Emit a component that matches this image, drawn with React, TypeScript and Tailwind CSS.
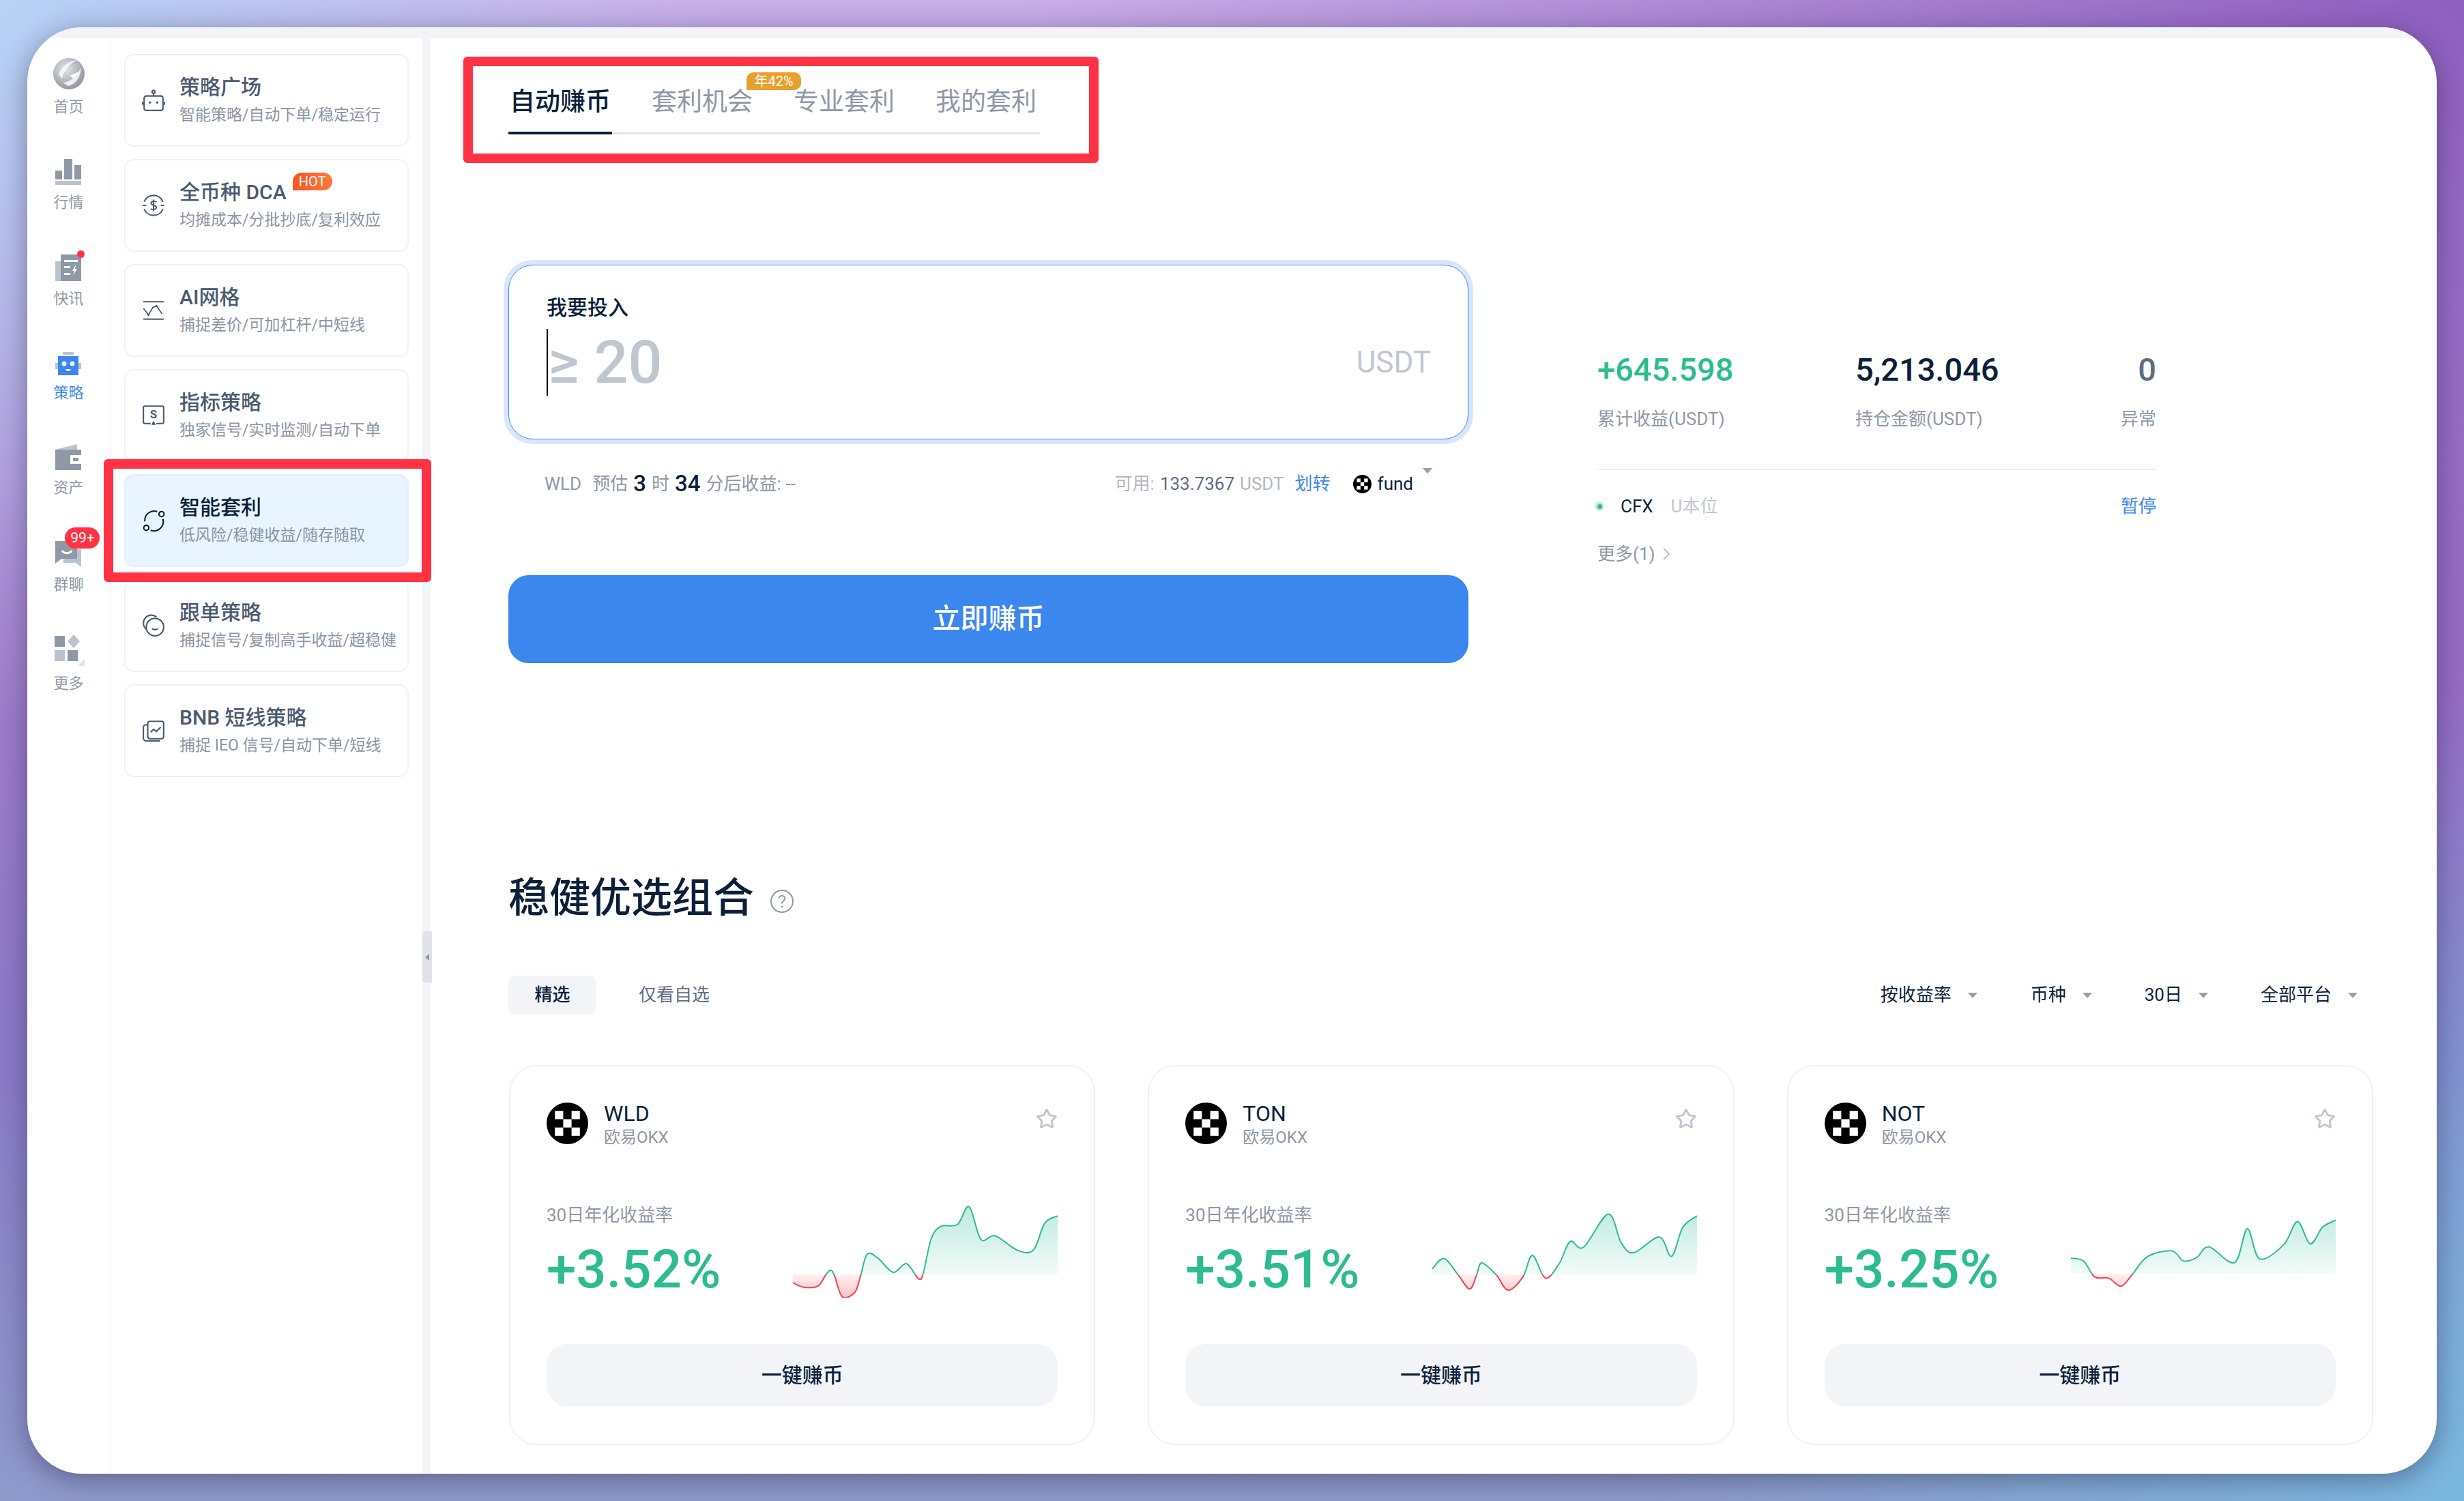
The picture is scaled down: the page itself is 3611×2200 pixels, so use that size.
import { ReactNode } from "react"
import { Star } from "lucide-react"

const gray = "#8f98a5"
const light = "#bcc3cd"

const navItems: { label: string; h: string; active?: boolean; icon: ReactNode }[] = [
  {
    label: "首页",
    h: "h-[116px]",
    icon: (
      <svg width="46" height="46" viewBox="0 0 46 46">
        <defs>
          <radialGradient id="globe" cx="40%" cy="35%" r="70%">
            <stop offset="0%" stopColor="#e4e6e9" />
            <stop offset="100%" stopColor="#8e939a" />
          </radialGradient>
        </defs>
        <circle cx="23" cy="23" r="23" fill="url(#globe)" />
        <path d="M8 24C12 12 24 4 34 3C26 8 16 16 13 30Z" fill="#f4f5f6" />
        <path d="M14 36C24 36 36 26 40 14C42 24 34 38 22 41Z" fill="#eef0f2" />
        <path d="M24 26L38 20L30 30Z" fill="#fff" />
      </svg>
    ),
  },
  {
    label: "行情",
    h: "h-[140px]",
    icon: (
      <svg width="38" height="38" viewBox="0 0 38 38" fill={gray}>
        <rect x="0" y="17" width="10" height="13" />
        <rect x="13" y="0" width="12" height="30" />
        <rect x="28" y="9" width="10" height="21" />
        <rect x="0" y="32" width="38" height="6" fill={light} />
      </svg>
    ),
  },
  {
    label: "快讯",
    h: "h-[141px]",
    icon: (
      <div className="relative">
        <svg width="38" height="39" viewBox="0 0 38 39">
          <rect x="0" y="10" width="10" height="29" fill={light} />
          <rect x="8" y="0" width="30" height="39" fill={gray} />
          <rect x="13" y="8" width="20" height="3" fill="#fff" />
          <rect x="13" y="17" width="9" height="3" fill="#fff" />
          <rect x="13" y="27" width="9" height="3" fill="#fff" />
          <path d="M30 15L25 24H28L26 31L32 21H29Z" fill="#fff" />
        </svg>
        <span className="absolute -top-[6px] -right-[5px] w-[11px] h-[11px] rounded-full bg-[#ff3344]" />
      </div>
    ),
  },
  {
    label: "策略",
    h: "h-[138px]",
    active: true,
    icon: (
      <svg width="38" height="34" viewBox="0 0 38 34">
        <rect x="11" y="0" width="16" height="4" fill={light} />
        <rect x="0" y="16" width="5" height="9" fill={light} />
        <rect x="33" y="16" width="5" height="9" fill={light} />
        <rect x="4" y="6" width="30" height="28" fill="#3b87ee" />
        <circle cx="13" cy="17" r="3.4" fill="#fff" />
        <circle cx="25" cy="17" r="3.4" fill="#fff" />
        <path d="M15 25H23C22 29 16 29 15 25Z" fill="#fff" />
      </svg>
    ),
  },
  {
    label: "资产",
    h: "h-[139px]",
    icon: (
      <svg width="38" height="38" viewBox="0 0 38 38">
        <path d="M0 8L32 0V8Z" fill={light} />
        <rect x="0" y="8" width="38" height="30" fill={gray} />
        <rect x="22" y="16" width="16" height="13" fill="#fff" />
        <rect x="26" y="20" width="8" height="5" fill={gray} />
      </svg>
    ),
  },
  {
    label: "群聊",
    h: "h-[142px]",
    icon: (
      <div className="relative">
        <svg width="38" height="38" viewBox="0 0 38 38">
          <path d="M12 12H38V38L30 32H12Z" fill={light} />
          <path d="M0 0H32V26H9L0 33Z" fill={gray} />
          <path d="M10 14C13 19 21 19 24 14" stroke="#fff" strokeWidth="3" fill="none" />
        </svg>
        <span className="absolute -top-[20px] left-[14px] w-[51px] h-[31px] rounded-full bg-[#ff3344] text-white text-[21px] leading-[31px] text-center">
          99+
        </span>
      </div>
    ),
  },
  {
    label: "更多",
    h: "h-[145px]",
    icon: (
      <svg width="46" height="46" viewBox="0 0 46 46">
        <rect x="2" y="2" width="15" height="16" fill={gray} />
        <path d="M30 0L39 10L30 20L21 10Z" fill={light} />
        <rect x="2" y="23" width="15" height="16" fill={light} />
        <rect x="21" y="23" width="15" height="16" fill={gray} />
        <path d="M46 36V46H36Z" fill="#dfe2e8" />
      </svg>
    ),
  },
]

const iconProps = {
  width: 34,
  height: 34,
  viewBox: "0 0 32 32",
  fill: "none",
  stroke: "#4a5a70",
  strokeWidth: 2,
}

const sideItems: { title: string; sub: string; hot?: boolean; active?: boolean; icon: ReactNode }[] = [
  {
    title: "策略广场",
    sub: "智能策略/自动下单/稳定运行",
    icon: (
      <svg {...iconProps}>
        <rect x="3" y="10" width="26" height="20" rx="3" />
        <circle cx="16" cy="4.5" r="2" />
        <path d="M16 6.5V10M1 18V22M31 18V22" />
        <circle cx="11" cy="19" r="1.6" fill="#4a5a70" stroke="none" />
        <circle cx="21" cy="19" r="1.6" fill="#4a5a70" stroke="none" />
      </svg>
    ),
  },
  {
    title: "全币种 DCA",
    sub: "均摊成本/分批抄底/复利效应",
    hot: true,
    icon: (
      <svg {...iconProps}>
        <path d="M3 11A14 14 0 0 1 29 11M3 21A14 14 0 0 0 29 21M1 16H6M26 16H31" />
        <path d="M20 11.5C19 10 13 9.5 12.5 13C12.5 16.5 20 15.5 20 19C19.5 22.5 13 22 12 20.5M16 8V24" strokeWidth="1.8" />
      </svg>
    ),
  },
  {
    title: "AI网格",
    sub: "捕捉差价/可加杠杆/中短线",
    icon: (
      <svg {...iconProps}>
        <path d="M2 4H30M2 28H30" />
        <path d="M2 13L9 22L15 12L20 10L28 21" strokeWidth="1.6" />
        <circle cx="9" cy="22" r="1.6" fill="#4a5a70" stroke="none" />
        <circle cx="20" cy="10" r="1.6" fill="#4a5a70" stroke="none" />
      </svg>
    ),
  },
  {
    title: "指标策略",
    sub: "独家信号/实时监测/自动下单",
    icon: (
      <svg {...iconProps}>
        <path d="M12 27H4A2 2 0 0 1 2 25V5A2 2 0 0 1 4 3H28A2 2 0 0 1 30 5V25A2 2 0 0 1 28 27H20" />
        <path d="M16 23L19 29H13Z" fill="#4a5a70" stroke="none" />
        <text x="16" y="20" textAnchor="middle" fontSize="16" fontWeight="700" fill="#4a5a70" stroke="none">
          S
        </text>
      </svg>
    ),
  },
  {
    title: "智能套利",
    sub: "低风险/稳健收益/随存随取",
    active: true,
    icon: (
      <svg {...iconProps} stroke="#0b1f3a">
        <path d="M21 3.5A13 13 0 0 0 4 17" />
        <path d="M29 14A13 13 0 0 1 12 29.5" />
        <circle cx="27" cy="7" r="3.5" />
        <circle cx="6" cy="26" r="3.5" />
      </svg>
    ),
  },
  {
    title: "跟单策略",
    sub: "捕捉信号/复制高手收益/超稳健",
    icon: (
      <svg {...iconProps}>
        <path d="M6 21A11 11 0 0 1 20 4" />
        <circle cx="18" cy="18" r="12" />
        <path d="M14 20C16 22 20 22 22 20" />
      </svg>
    ),
  },
  {
    title: "BNB 短线策略",
    sub: "捕捉 IEO 信号/自动下单/短线",
    icon: (
      <svg {...iconProps}>
        <rect x="8" y="3" width="22" height="24" rx="3" />
        <path d="M8 8H5A3 3 0 0 0 2 11V26A4 4 0 0 0 6 30H25" />
        <path d="M12 18L16 14L20 17L26 11" />
      </svg>
    ),
  },
]

const green = "#2cbc90"

type SparkProps = {
  id: string
  points: number[][]
  x0: number
  x1: number
  top: number
  bottom: number
  base: number
}

// catmull-rom through the read-off points
function toPath(p: number[][]) {
  let d = `M${p[0][0]} ${p[0][1]}`
  for (let i = 0; i < p.length - 1; i++) {
    const a = p[Math.max(i - 1, 0)]
    const b = p[i]
    const c = p[i + 1]
    const e = p[Math.min(i + 2, p.length - 1)]
    const c1x = b[0] + (c[0] - a[0]) / 6
    const c1y = b[1] + (c[1] - a[1]) / 6
    const c2x = c[0] - (e[0] - b[0]) / 6
    const c2y = c[1] - (e[1] - b[1]) / 6
    d += ` C${c1x} ${c1y} ${c2x} ${c2y} ${c[0]} ${c[1]}`
  }
  return d
}

function Spark({ id, points, x0, x1, top, bottom, base }: SparkProps) {
  const line = toPath(points)
  const area = `${line} L${x1} ${base} L${x0} ${base} Z`
  return (
    <svg width="388" height="136" viewBox={`${x0} ${top} ${x1 - x0} ${bottom - top}`} preserveAspectRatio="none">
      <defs>
        <linearGradient id={`${id}g`} gradientUnits="userSpaceOnUse" x1="0" x2="0" y1={top} y2={base}>
          <stop offset="0%" stopColor={green} stopOpacity="0.32" />
          <stop offset="100%" stopColor={green} stopOpacity="0.06" />
        </linearGradient>
        <linearGradient id={`${id}r`} gradientUnits="userSpaceOnUse" x1="0" x2="0" y1={base} y2={bottom}>
          <stop offset="0%" stopColor="#f5404c" stopOpacity="0.08" />
          <stop offset="100%" stopColor="#f5404c" stopOpacity="0.32" />
        </linearGradient>
        <clipPath id={`${id}a`}>
          <rect x={x0} y={top} width={x1 - x0} height={base - top} />
        </clipPath>
        <clipPath id={`${id}b`}>
          <rect x={x0} y={base} width={x1 - x0} height={bottom - base} />
        </clipPath>
      </defs>
      <path d={area} fill={`url(#${id}g)`} clipPath={`url(#${id}a)`} />
      <path d={area} fill={`url(#${id}r)`} clipPath={`url(#${id}b)`} />
      <path d={line} fill="none" stroke={green} strokeWidth="2" vectorEffect="non-scaling-stroke" clipPath={`url(#${id}a)`} />
      <path d={line} fill="none" stroke="#f5404c" strokeWidth="2" vectorEffect="non-scaling-stroke" clipPath={`url(#${id}b)`} />
    </svg>
  )
}

function Okx({ size }: { size: number }) {
  return (
    <svg width={size} height={size} viewBox="0 0 60 60" className="shrink-0">
      <circle cx="30" cy="30" r="30" fill="#000" />
      <g fill="#fff">
        <rect x="12" y="12" width="12" height="12" />
        <rect x="36" y="12" width="12" height="12" />
        <rect x="24" y="24" width="12" height="12" />
        <rect x="12" y="36" width="12" height="12" />
        <rect x="36" y="36" width="12" height="12" />
      </g>
    </svg>
  )
}

const cards: { coin: string; rate: string; spark: SparkProps }[] = [
  {
    coin: "WLD",
    rate: "+3.52%",
    spark: {
      id: "wld",
      x0: 772,
      x1: 1448,
      top: 590,
      bottom: 945,
      base: 857,
      points: [[772, 888], [800, 905], [836, 900], [855, 860], [868, 840], [878, 860], [898, 941], [930, 925], [945, 860], [962, 778], [990, 795], [1028, 848], [1062, 815], [1093, 873], [1105, 850], [1125, 720], [1150, 672], [1192, 665], [1222, 597], [1252, 722], [1288, 708], [1345, 763], [1386, 763], [1415, 660], [1448, 632]],
    },
  },
  {
    coin: "TON",
    rate: "+3.51%",
    spark: {
      id: "ton",
      x0: 767,
      x1: 1441,
      top: 590,
      bottom: 945,
      base: 857,
      points: [[767, 835], [797, 795], [833, 858], [862, 912], [880, 858], [893, 812], [930, 858], [960, 916], [998, 865], [1022, 783], [1055, 870], [1090, 815], [1118, 730], [1152, 752], [1215, 625], [1248, 735], [1280, 773], [1345, 713], [1376, 787], [1405, 675], [1441, 632]],
    },
  },
  {
    coin: "NOT",
    rate: "+3.25%",
    spark: {
      id: "not",
      x0: 676,
      x1: 1278,
      top: 537,
      bottom: 860,
      base: 777,
      points: [[676, 722], [705, 733], [730, 788], [762, 792], [790, 820], [815, 780], [850, 717], [905, 697], [932, 732], [962, 720], [990, 683], [1048, 738], [1077, 620], [1105, 725], [1160, 675], [1191, 595], [1220, 673], [1248, 615], [1278, 590]],
    },
  },
]

function Caret() {
  return <span className="w-0 h-0 border-x-[7px] border-x-transparent border-t-[8px] border-t-[#969eab]" />
}

const filters = [
  { label: "按收益率", cls: "" },
  { label: "币种", cls: "ml-[78px]" },
  { label: "30日", cls: "ml-[77px]" },
  { label: "全部平台", cls: "ml-[77px]" },
]

export default function App() {
  return (
    <div className="w-[3611px] h-[2200px] pt-[40px] pl-[40px] overflow-hidden font-['Roboto','Noto_Sans_CJK_SC',sans-serif] bg-[radial-gradient(circle_at_0%_0%,#b6d2f5_0%,transparent_25%),radial-gradient(circle_at_100%_100%,#7ab8e0_0%,transparent_28%),radial-gradient(circle_at_100%_0%,#8f5fc0,transparent_50%),linear-gradient(180deg,#c9afe8,#a57ccc_40%,#8a7ac8_70%,#8f9acb)]">
      <div className="relative w-[3531px] h-[2120px] rounded-[80px] bg-white overflow-hidden shadow-[0_8px_40px_rgba(30,30,60,0.45)] flex flex-col">
        <div className="h-[16px] bg-[#f2f4f8]" />
        <div className="flex flex-1">
          {/* icon rail */}
          <div className="w-[123px] border-r-2 border-[#f4f5f8] flex flex-col items-center">
            {navItems.map((n) => (
              <div key={n.label} className={`${n.h} flex flex-col items-center justify-end`}>
                {n.icon}
                <span className={`mt-[11px] text-[22px] leading-[30px] ${n.active ? "text-[#3b87ee]" : "text-[#8f98a5]"}`}>{n.label}</span>
              </div>
            ))}
          </div>

          {/* strategy list */}
          <div className="w-[456px] pt-[23px] pl-[19px] flex flex-col gap-[18px]">
            {sideItems.map((s) => (
              <div
                key={s.title}
                className={`w-[417px] h-[136px] rounded-[14px] border-2 flex items-center pl-[24px] ${s.active ? "bg-[#e8f4ff] border-[#e3eef8]" : "bg-white border-[#f0f1f5]"}`}
              >
                <div className="shrink-0">{s.icon}</div>
                <div className="ml-[21px] flex flex-col -mt-[2px]">
                  <div className="flex items-start">
                    <span className={`text-[30px] leading-[42px] font-medium ${s.active ? "text-[#0b1f3a]" : "text-[#4a5a70]"}`}>{s.title}</span>
                    {s.hot && (
                      <span className="ml-[9px] -mt-[8px] w-[58px] h-[26px] rounded-[13px] rounded-bl-none bg-gradient-to-r from-[#f5551f] to-[#ff7a3c] text-white text-[20px] leading-[26px] text-center">
                        HOT
                      </span>
                    )}
                  </div>
                  <span className="mt-[3px] text-[23px] leading-[34px] text-[#8b95a3] whitespace-nowrap">{s.sub}</span>
                </div>
              </div>
            ))}
          </div>

          <div className="relative w-[12px] bg-[#f2f4f8]">
            <div className="absolute left-0 top-[1309px] w-[14px] h-[75px] bg-[#dfe2e8] rounded-l-[4px] flex items-center justify-center">
              <span className="w-0 h-0 border-y-[5px] border-y-transparent border-r-[6px] border-r-[#8f98a5]" />
            </div>
          </div>

          {/* main */}
          <div className="flex-1 pl-[114px] pt-[69px]">
            <div className="w-[779px] flex gap-[58px] border-b-[3px] border-[#dfe2e8] h-[72px]">
              <div className="w-[152px] h-[72px] border-b-4 border-[#0b1f3a] text-center text-[37px] leading-[50px] font-medium text-[#0b1f3a]">自动赚币</div>
              <div className="relative w-[150px] text-[37px] leading-[50px] text-[#8f98a5] whitespace-nowrap">
                套利机会
                <span className="absolute left-[139px] -top-[19px] w-[80px] h-[26px] rounded-[10px] rounded-bl-none bg-[#e8a02c] text-white text-[20px] leading-[26px] text-center">年42%</span>
              </div>
              <div className="w-[150px] text-[37px] leading-[50px] text-[#8f98a5] whitespace-nowrap">专业套利</div>
              <div className="w-[150px] text-[37px] leading-[50px] text-[#8f98a5] whitespace-nowrap">我的套利</div>
            </div>

            <div className="flex">
              <div className="w-[1407px]">
                <div className="mt-[191px] h-[256px] rounded-[36px] border-[1.5px] border-[#3b87ee] shadow-[0_0_0_7px_#d8e6fb] pl-[55px] pr-[54px] pt-[44px]">
                  <div className="text-[30px] leading-[36px] font-medium text-[#0b1f3a]">我要投入</div>
                  <div className="mt-[13px] flex items-center justify-between">
                    <span className="h-[98px] border-l-2 border-black text-[88px] leading-[98px] font-medium text-[#c0c6cf] whitespace-nowrap">≥ 20</span>
                    <span className="text-[44px] text-[#c0c6cf]">USDT</span>
                  </div>
                </div>

                <div className="mt-[45px] h-[40px] pl-[53px] pr-[53px] flex items-center justify-between text-[26px] text-[#8f98a5]">
                  <div className="flex items-center whitespace-nowrap">
                    <span>WLD</span>
                    <span className="ml-[16px]">预估</span>
                    <span className="mx-[8px] text-[33px] font-medium text-[#0b1f3a]">3</span>
                    <span>时</span>
                    <span className="mx-[8px] text-[33px] font-medium text-[#0b1f3a]">34</span>
                    <span>分后收益: --</span>
                  </div>
                  <div className="flex items-center whitespace-nowrap">
                    <span className="text-[#b1b8c2]">可用:</span>
                    <span className="ml-[8px] text-[#5f6d80]">133.7367</span>
                    <span className="ml-[8px] text-[#b1b8c2]">USDT</span>
                    <span className="ml-[16px] text-[#3b87ee]">划转</span>
                    <span className="ml-[33px]"><Okx size={27} /></span>
                    <span className="ml-[9px] text-[#0b1f3a]">fund</span>
                    <span className="ml-[14px]"><Caret /></span>
                  </div>
                </div>

                <div className="mt-[114px] h-[129px] rounded-[30px] bg-[#3b87ee] text-white text-[41px] font-medium flex items-center justify-center">立即赚币</div>
              </div>

              <div className="ml-[189px] w-[819px] pt-[315px]">
                <div className="flex justify-between items-start">
                  <div className="w-[378px]">
                    <div className="text-[47px] leading-[60px] font-medium text-[#2cbc90]">+645.598</div>
                    <div className="mt-[25px] text-[26px] leading-[34px] text-[#8f98a5]">累计收益(USDT)</div>
                  </div>
                  <div className="flex-1">
                    <div className="text-[47px] leading-[60px] font-medium text-[#0b1f3a]">5,213.046</div>
                    <div className="mt-[25px] text-[26px] leading-[34px] text-[#8f98a5]">持仓金额(USDT)</div>
                  </div>
                  <div className="text-right">
                    <div className="text-[47px] leading-[60px] font-medium text-[#5f6d80]">0</div>
                    <div className="mt-[25px] text-[26px] leading-[34px] text-[#8f98a5]">异常</div>
                  </div>
                </div>
                <div className="mt-[56px] h-[2px] bg-[#eef0f4]" />
                <div className="mt-[35px] h-[36px] flex items-center text-[26px]">
                  <span className="-ml-[4px] w-[14px] h-[14px] rounded-full bg-[#c8eadd] flex items-center justify-center">
                    <span className="w-[7px] h-[7px] rounded-full bg-[#2cbc90]" />
                  </span>
                  <span className="ml-[24px] text-[#0b1f3a]">CFX</span>
                  <span className="ml-[26px] text-[#c0c6cf]">U本位</span>
                  <span className="ml-auto text-[#3b87ee]">暂停</span>
                </div>
                <div className="mt-[34px] h-[36px] flex items-center text-[26px] text-[#8f98a5]">
                  更多(1)
                  <svg width="12" height="22" viewBox="0 0 12 22" className="ml-[10px]" fill="none" stroke="#a9b0bb" strokeWidth="1.6">
                    <path d="M2 3L10 11L2 19" />
                  </svg>
                </div>
              </div>
            </div>

            <div className="mt-[305px] h-[80px] flex items-center">
              <span className="text-[60px] leading-[80px] font-medium text-[#0b1f3a]">稳健优选组合</span>
              <svg width="34" height="34" viewBox="0 0 34 34" className="ml-[24px] mt-[8px]" fill="none" stroke="#8f98a5" strokeWidth="2">
                <circle cx="17" cy="17" r="16" />
                <path d="M12.5 13C12.5 7.5 21.5 7.5 21.5 13C21.5 16 17 16 17 20.5" />
                <circle cx="17" cy="25" r="1.4" fill="#8f98a5" stroke="none" />
              </svg>
            </div>

            <div className="mt-[73px] h-[57px] w-[2733px] flex items-center pr-[23px]">
              <div className="w-[129px] h-[57px] rounded-[10px] bg-[#f2f4f8] text-[26px] font-medium text-[#0b1f3a] flex items-center justify-center">精选</div>
              <span className="ml-[62px] text-[26px] text-[#5f6d80]">仅看自选</span>
              <div className="ml-auto flex items-center">
                {filters.map((f) => (
                  <div key={f.label} className={`flex items-center gap-[24px] text-[26px] text-[#0b1f3a] ${f.cls}`}>
                    {f.label}
                    <Caret />
                  </div>
                ))}
              </div>
            </div>

            <div className="mt-[74px] ml-[1px] w-[2732px] grid grid-cols-3 gap-[77px]">
              {cards.map((c) => (
                <div key={c.coin} className="h-[557px] rounded-[40px] border-2 border-[#f0f1f5] px-[53px] pt-[53px]">
                  <div className="h-[61px] flex items-start">
                    <Okx size={61} />
                    <div className="ml-[23px] flex flex-col">
                      <span className="text-[32px] leading-[32px] text-[#0b1f3a]">{c.coin}</span>
                      <span className="mt-[4px] text-[24px] leading-[30px] text-[#8f98a5]">欧易OKX</span>
                    </div>
                    <Star size={32} strokeWidth={2.2} className="ml-auto mt-[8px] text-[#c0c6cf]" />
                  </div>
                  <div className="mt-[89px] h-[136px] flex justify-between">
                    <div>
                      <div className="text-[26px] leading-[30px] text-[#8f98a5] whitespace-nowrap">30日年化收益率</div>
                      <div className="mt-[25px] text-[78px] leading-[80px] font-medium text-[#2cbc90]">{c.rate}</div>
                    </div>
                    <Spark {...c.spark} />
                  </div>
                  <div className="mt-[68px] h-[91px] rounded-[30px] bg-[#f2f4f8] text-[30px] font-medium text-[#0b1f3a] flex items-center justify-center">一键赚币</div>
                </div>
              ))}
            </div>
          </div>
        </div>

        {/* red annotation frames */}
        <div className="absolute left-[112px] top-[633px] w-[480px] h-[180px] border-[14px] border-[#ff3344] rounded-[6px]" />
        <div className="absolute left-[639px] top-[43px] w-[931px] h-[156px] border-[14px] border-[#ff3344] rounded-[6px]" />
      </div>
    </div>
  )
}
